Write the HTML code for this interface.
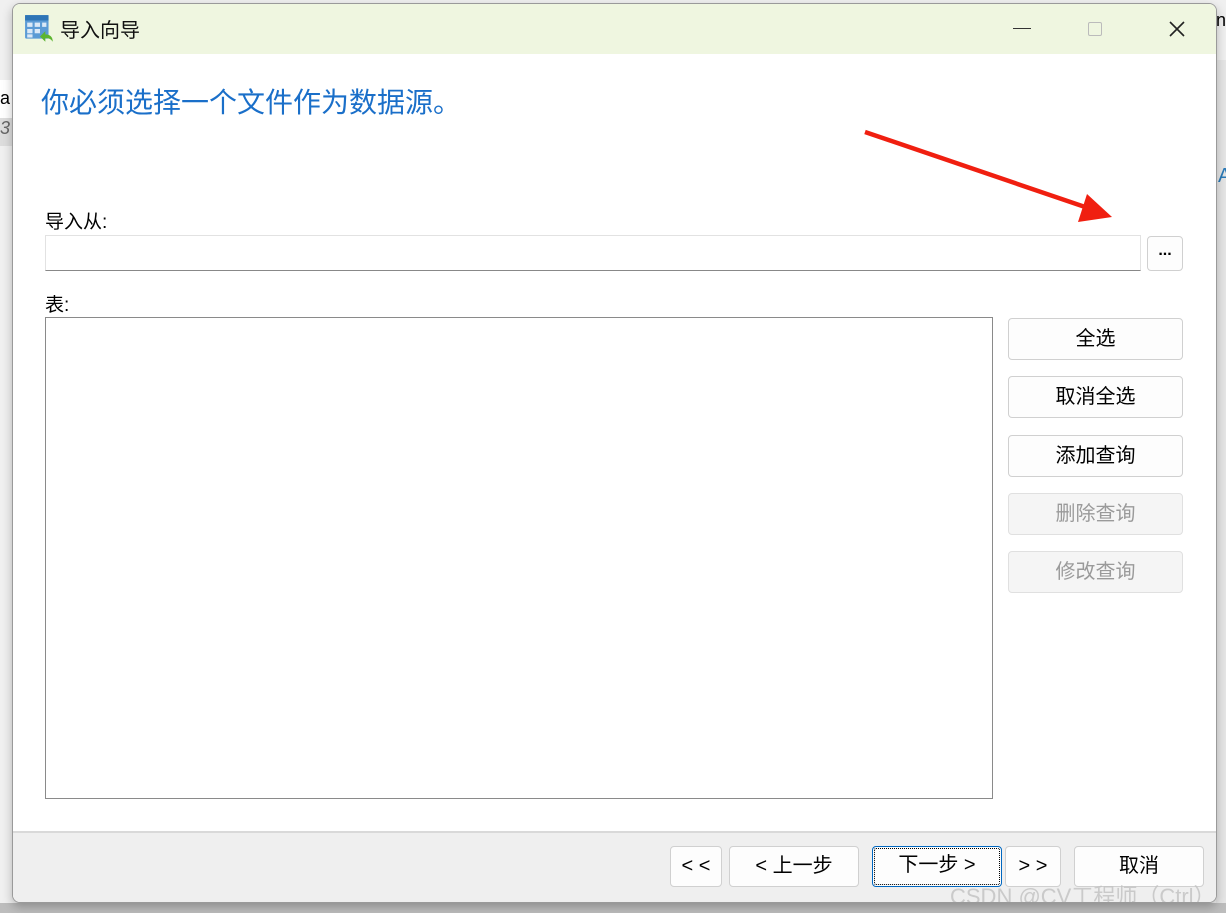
<!DOCTYPE html>
<html><head><meta charset="utf-8"><style>
*{box-sizing:border-box;margin:0;padding:0}
body{width:1226px;height:913px;overflow:hidden;background:#c9c9c9;font-family:"Liberation Sans","Microsoft YaHei","Noto Sans CJK SC",sans-serif;position:relative}
.abs{position:absolute}
.dlg{position:absolute;left:12px;top:3px;width:1205px;height:900px;background:#fff;border:1px solid #9a9a9a;border-radius:8px;overflow:hidden;box-shadow:0 4px 10px rgba(0,0,0,.25)}
.title{position:absolute;left:0;top:0;width:100%;height:50px;background:#eff6e0}
.btn{position:absolute;background:#fdfdfd;border:1px solid #d0d0d0;border-radius:4px;font-size:20px;color:#000;text-align:center;font-family:"Liberation Sans","Noto Sans CJK SC",sans-serif}
.dis{background:#f5f5f5;border-color:#e0e0e0;color:#9a9a9a}
</style></head><body>
<div class="abs" style="left:0;top:0;width:1226px;height:913px;background:#f0f0f0"></div>
<div class="abs" style="left:0;top:80px;width:14px;height:40px;background:#fff"></div>
<div class="abs" style="left:0;top:88px;font-size:18px">a</div>
<div class="abs" style="left:0;top:118px;width:14px;height:28px;background:#ddd;color:#666;font-style:italic;font-size:18px">3</div>
<div class="abs" style="left:1216px;top:10px;font-size:18px">ne</div>
<div class="abs" style="left:1216px;top:60px;width:10px;height:853px;background:#e6e6e6"></div>
<div class="abs" style="left:1218px;top:165px;font-size:20px;color:#2a7ab8">A</div>
<div class="abs" style="left:0;top:903px;width:1226px;height:10px;background:#bdbdbd"></div>

<div class="dlg">
  <div class="title"></div>
  <svg class="abs" style="left:11px;top:9px" width="32" height="32" viewBox="0 0 30 30">
    <rect x="1" y="2" width="22" height="22" fill="#5b9bd5" rx="1"/>
    <rect x="1" y="2" width="22" height="5" fill="#2e75b6"/>
    <g fill="#dbe9f7"><rect x="3" y="9" width="5" height="4"/><rect x="10" y="9" width="5" height="4"/><rect x="17" y="9" width="4" height="4"/><rect x="3" y="15" width="5" height="4"/><rect x="10" y="15" width="5" height="4"/><rect x="3" y="20" width="5" height="3"/></g>
    <path d="M15 22 L20 17 L20 20 C24 20 27 22 27 27 C25 24 23 23.5 20 23.5 L20 27 Z" fill="#5cb531"/>
  </svg>
  <div class="abs" style="left:47px;top:10px;font-size:20px;color:#111">导入向导</div>
  <div class="abs" style="left:1000px;top:24px;width:18px;height:1px;background:#333"></div>
  <div class="abs" style="left:1075px;top:18px;width:14px;height:14px;border:1px solid #bbb;border-radius:2px"></div>
  <svg class="abs" style="left:1155px;top:16px" width="18" height="18"><path d="M2 2L16 16M16 2L2 16" stroke="#222" stroke-width="1.6"/></svg>

  <div class="abs" style="left:28px;top:77px;font-size:28px;color:#1a6fc9">你必须选择一个文件作为数据源。</div>

  <svg class="abs" style="left:840px;top:120px" width="270" height="100"><path d="M12 8 L238 85" stroke="#f01f10" stroke-width="4.5"/><path d="M234 70 L259 93 L225 98 Z" fill="#f01f10"/></svg>

  <div class="abs" style="left:32px;top:203px;font-size:19px">导入从:</div>
  <div class="abs" style="left:32px;top:231px;width:1096px;height:36px;border:1px solid #e2e2e2;border-bottom:1px solid #888"></div>
  <div class="btn" style="left:1134px;top:232px;width:36px;height:35px;font-size:16px;line-height:28px;font-weight:bold">...</div>

  <div class="abs" style="left:32px;top:286px;font-size:19px">表:</div>
  <div class="abs" style="left:32px;top:313px;width:948px;height:482px;border:1px solid #8a8a8a"></div>

  <div class="btn" style="left:995px;top:314px;width:175px;height:42px;line-height:40px">全选</div>
  <div class="btn" style="left:995px;top:372px;width:175px;height:42px;line-height:40px">取消全选</div>
  <div class="btn" style="left:995px;top:431px;width:175px;height:42px;line-height:40px">添加查询</div>
  <div class="btn dis" style="left:995px;top:489px;width:175px;height:42px;line-height:40px">删除查询</div>
  <div class="btn dis" style="left:995px;top:547px;width:175px;height:42px;line-height:40px">修改查询</div>

  <div class="abs" style="left:0;top:827px;width:100%;height:73px;background:#efefef;border-top:2px solid #d9d9d9"></div>
  <div class="btn" style="left:657px;top:842px;width:52px;height:41px;line-height:39px">&lt; &lt;</div>
  <div class="btn" style="left:716px;top:842px;width:130px;height:41px;line-height:39px">&lt; 上一步</div>
  <div class="btn" style="left:859px;top:842px;width:130px;height:41px;line-height:37px;border:1px solid #0067c0;outline:1px dotted #000;outline-offset:-3px">下一步 &gt;</div>
  <div class="btn" style="left:992px;top:842px;width:56px;height:41px;line-height:39px">&gt; &gt;</div>
  <div class="btn" style="left:1061px;top:842px;width:130px;height:41px;line-height:39px">取消</div>
  <div class="abs" style="left:937px;top:875px;font-size:22px;color:rgba(195,195,195,.85);white-space:nowrap">CSDN @CV工程师（Ctrl）</div>
</div>
</body></html>
